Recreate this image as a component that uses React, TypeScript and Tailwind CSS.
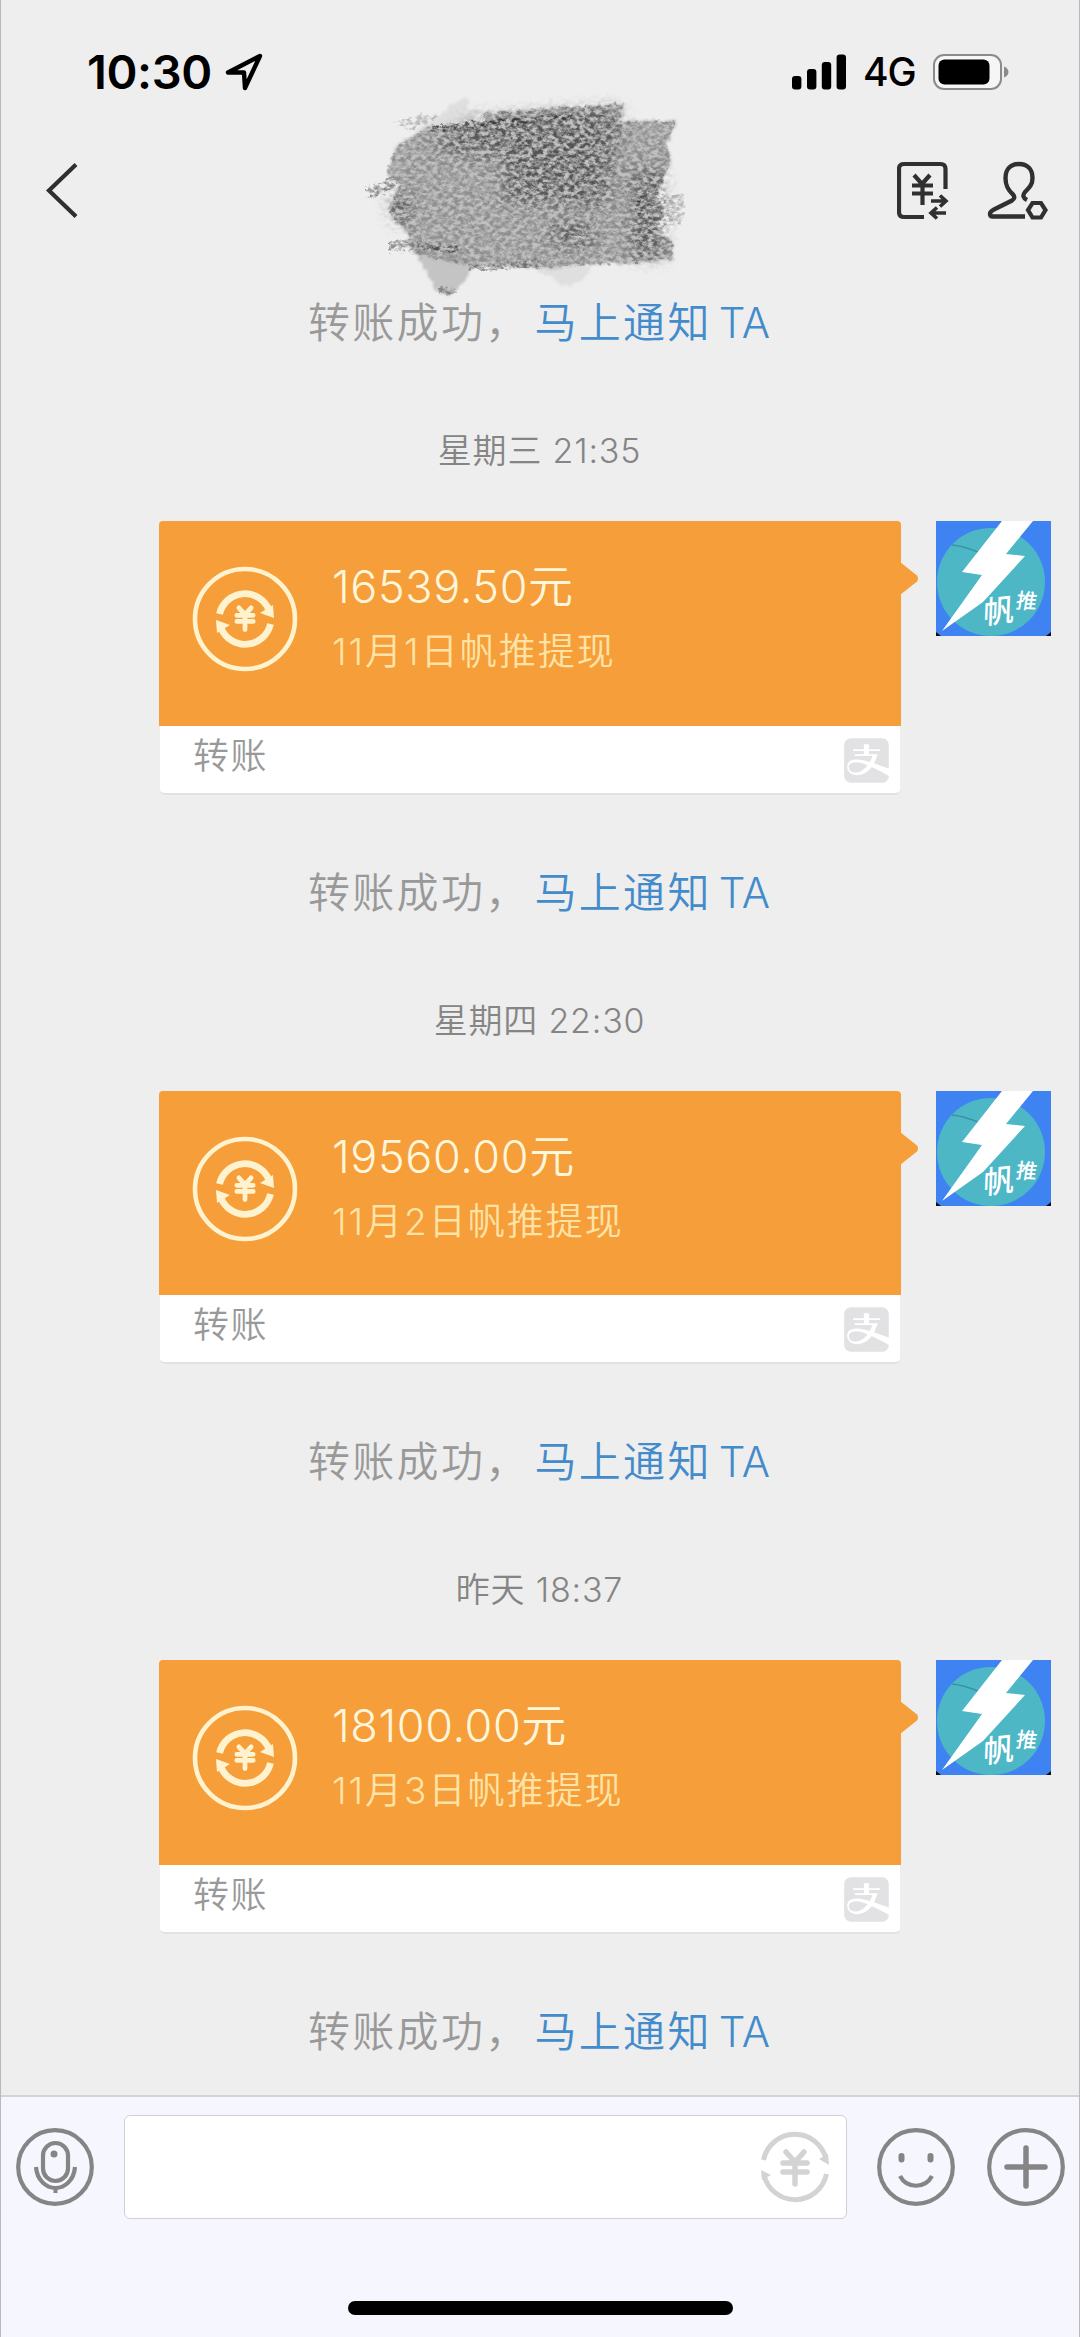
import { FaAlipay } from "react-icons/fa";

type Transfer = {
  time: string;
  amount: string;
  note: string;
};

const transfers: Transfer[] = [
  { time: "星期三 21:35", amount: "16539.50", note: "11月1日帆推提现" },
  { time: "星期四 22:30", amount: "19560.00", note: "11月2日帆推提现" },
  { time: "昨天 18:37", amount: "18100.00", note: "11月3日帆推提现" },
];

function StatusBar() {
  return (
    <div className="flex h-[97px] items-end justify-between pr-[70px] pb-[5px] pl-[86px]">
      <div className="flex h-[41px] items-center">
        <span className="w-[138px] text-[47px] leading-none font-semibold tracking-[-0.4px] text-black">10:30</span>
        <svg className="h-[38px] w-[38px]" viewBox="0 0 38 38" fill="none" stroke="#000" strokeWidth="4.4" strokeLinejoin="round">
          <path d="M35 3 L3 19.5 L19 19.5 L20 35 Z" />
        </svg>
      </div>
      <div className="flex h-[41px] items-center">
        <svg className="h-[36px] w-[54px]" viewBox="0 0 54 36">
          <rect x="0" y="22" width="9.4" height="13.5" rx="3" />
          <rect x="15" y="15" width="9.4" height="20.5" rx="3" />
          <rect x="29.8" y="8" width="9.4" height="27.5" rx="3" />
          <rect x="44.6" y="0.5" width="9.4" height="35" rx="3" />
        </svg>
        <span className="ml-[17px] w-[70px] text-[39px] leading-none font-[450] tracking-[-1.2px] text-black">4G</span>
        <svg className="h-[36px] w-[76px]" viewBox="0 0 76 36">
          <rect x="1" y="1" width="67" height="34" rx="10" fill="#f6f6f6" stroke="#8b8b8b" strokeWidth="2" />
          <rect x="5.500" y="5.500" width="51" height="25" rx="6" />
          <path d="M71 12.500 q4.500 2 4.500 5.500 q0 3.500 -4.500 5.500z" fill="#8b8b8b" />
        </svg>
      </div>
    </div>
  );
}

// Crayon strokes that cover the contact's name
function NameScribble() {
  return (
    <svg className="absolute -top-[9px] left-[358px] h-[220px] w-[340px]" viewBox="0 0 340 220">
      <defs>
        <filter id="wash" x="-5%" y="-5%" width="110%" height="110%">
          <feTurbulence type="fractalNoise" baseFrequency="0.14" numOctaves="3" seed="4" result="edge" />
          <feDisplacementMap in="SourceGraphic" in2="edge" scale="9" xChannelSelector="R" yChannelSelector="G" />
          <feGaussianBlur stdDeviation="1.2" />
        </filter>
        <filter id="crayon" x="-5%" y="-5%" width="110%" height="110%">
          <feTurbulence type="fractalNoise" baseFrequency="0.2" numOctaves="3" seed="4" result="edge" />
          <feDisplacementMap in="SourceGraphic" in2="edge" scale="9" xChannelSelector="R" yChannelSelector="G" result="rough" />
          <feTurbulence type="fractalNoise" baseFrequency="0.19 0.27" numOctaves="5" seed="21" result="grain" />
          <feColorMatrix in="grain" type="matrix" values="0 0 0 0 0  0 0 0 0 0  0 0 0 0 0  2.2 1.6 0 0 -1.4" result="mask" />
          <feComposite in="rough" in2="mask" operator="in" />
          <feGaussianBlur stdDeviation="0.6" />
        </filter>
        <filter id="smudge" x="-30%" y="-30%" width="160%" height="160%">
          <feGaussianBlur stdDeviation="8" />
        </filter>
      </defs>
      <g filter="url(#wash)" fill="#808080">
        <path
          d="M68 39 L124 34 L126 25 L264 15 L262 34 L318 33 L308 54 L312 74 L298 104 L302 124 L298 146 L314 152 L314 172 L240 176 L178 180 L112 178 L54 166 L50 148 L30 122 L40 98 L28 84 L38 58Z"
          fillOpacity="0.42"
        />
        <path d="M54 160 L118 176 L104 196 L90 208 L76 200 L68 184Z" fillOpacity="0.38" />
        <path d="M50 48 L106 8 L110 20 L122 24 L118 34 L68 39Z M178 178 L232 178 L226 190 L212 200 L180 184Z" fillOpacity="0.14" />
      </g>
      <g filter="url(#crayon)">
        <path
          d="M68 39 L124 34 L126 25 L264 15 L262 34 L318 33 L308 54 L312 74 L298 104 L302 124 L298 146 L314 152 L314 172 L240 176 L178 180 L112 178 L54 166 L50 148 L30 122 L40 98 L28 84 L38 58Z"
          fill="#5c5c5c"
          fillOpacity="0.5"
        />
        <path d="M300 106 L326 106 L324 134 L300 140Z M34 34 L64 26 L80 30 L50 42Z" fill="#777" fillOpacity="0.45" />
        <path d="M8 106 L34 94 M30 158 L54 158" fill="none" stroke="#666" strokeOpacity="0.7" strokeWidth="11" />
        <g filter="url(#smudge)" fill="#2b2b2b">
          <path d="M110 32 L262 20 L258 56 L246 118 L140 112 L150 72 L70 60Z" fillOpacity="0.6" />
          <path d="M190 136 H234 V158 H196Z M274 82 H304 V170 H274Z M30 104 H48 V134 H34Z" fillOpacity="0.6" />
        </g>
        <path d="M72 41 L130 36 L210 28 M60 158 L100 162 M282 110 L278 126" fill="none" stroke="#222" strokeOpacity="0.6" strokeWidth="6" />
        <path d="M110 180 L180 176 M80 202 L98 204" fill="none" stroke="#555" strokeOpacity="0.6" strokeWidth="6" />
      </g>
    </svg>
  );
}

function NavBar() {
  return (
    <header className="relative flex h-[188px] items-start justify-between pt-[64px] pr-[30px] pl-[43px]">
      <svg className="mt-[1px] h-[57px] w-[36px]" viewBox="0 0 36 57" fill="none" stroke="#2f2f2f" strokeWidth="4.2">
        <path d="M32 2.500 L5 28.500 L32 54.500" />
      </svg>
      <NameScribble />
      <div className="flex gap-[36px]">
        <svg className="h-[60px] w-[54px]" viewBox="0 0 54 60" fill="none" stroke="#303030" strokeWidth="4.200">
          <path d="M48.500 28 V8 Q48.500 3 43.500 3 H7 Q2 3 2 8 V51 Q2 56 7 56 H27" />
          <path d="M17 14 L25 23 L33 14 M15 24.500 H36 M15 32.500 H36 M25.500 22 V44" />
          <path d="M34 40 H49 M43 34.500 L49 40 L43 45.500 M49 52 H34 M40 46.500 L34 52 L40 57.500" strokeWidth="3.600" />
        </svg>
        <svg className="h-[60px] w-[62px]" viewBox="0 0 62 60" fill="none" stroke="#303030" strokeWidth="4.400">
          <path d="M40 39 Q34 36 38 31 C42 27 45.500 24 45.500 17 C45.500 8 40 3 32 3 C24 3 18.500 8 18.500 17 C18.500 25 21 29 26 33.500 Q29 37 25 39.500 L7 48.500 Q3 50.500 3 53 Q3 55.500 6 55.500 H38" />
          <path d="M45.500 42 H54 L58.500 49 L54 56.500 H45.500 L41 49Z" strokeWidth="4.200" />
        </svg>
      </div>
    </header>
  );
}

function YenMark({ strokeWidth }: { strokeWidth: number }) {
  return (
    <path
      d="M-9 -15 L0 -5 L9 -15 M-12 -4 H12 M-12 5 H12 M0 -6 V17"
      fill="none"
      stroke="currentColor"
      strokeLinecap="round"
      strokeWidth={strokeWidth}
    />
  );
}

function TransferIcon() {
  return (
    <svg className="h-[106px] w-[106px] shrink-0 text-[#fff3cf]" viewBox="-53 -53 106 106" fill="none" stroke="currentColor">
      <circle r="50" strokeWidth="4.600" />
      <path d="M-25.500 -5 A26 26 0 0 1 24 -9" strokeWidth="6.800" />
      <path d="M25.500 5 A26 26 0 0 1 -24 9" strokeWidth="6.800" />
      <path d="M28 -14 L29 -1 L15 -6Z M-28 14 L-29 1 L-15 6Z" fill="currentColor" stroke="none" />
      <g transform="translate(0 -1) scale(0.68)">
        <YenMark strokeWidth={7} />
      </g>
    </svg>
  );
}

function Avatar() {
  return (
    <svg className="h-[115px] w-[115px]" viewBox="0 0 115 115">
      <rect width="115" height="115" fill="#3f83f2" />
      <circle cx="55" cy="61" r="54" fill="#4db7c6" />
      <path d="M16 24 Q28 25 44 32" fill="none" stroke="#3793a4" strokeWidth="1.500" />
      <path d="M66 0 H97 L70 33 L89 35 L47 81 L6 110 L46 54 L26 51Z" fill="#fff" />
      <path d="M0 115 V111 L5 115Z M115 115 V111 L110 115Z" fill="#111" />
      <g fill="#fff" fontFamily="'Noto Sans CJK SC',sans-serif" fontWeight="500">
        <text transform="translate(47 103) rotate(-6) skewX(-8)" fontSize="31">帆</text>
        <text transform="translate(79 87) rotate(3) skewX(-6)" fontSize="21">推</text>
      </g>
    </svg>
  );
}

function SentNotice() {
  return (
    <p className="flex h-[60px] items-center pl-[308px] text-[42px] leading-[60px] font-[350] tracking-[2.300px] whitespace-nowrap text-[#999]">
      转账成功，
      <span className="ml-[5px] text-[#438bcb]">马上通知<span className="ml-[7px] tracking-[0px]">TA</span></span>
    </p>
  );
}

function TransferMessage({ time, amount, note }: Transfer) {
  return (
    <section>
      <p className="mt-[74px] h-[48px] text-center text-[34px] leading-[48px] font-[350] tracking-[0.800px] text-[#858585]">{time}</p>
      <div className="mt-[46px] flex items-start">
        <div className="relative ml-[159px] h-[273.700px] w-[742px]">
          <div className="flex h-[204.500px] rounded-t-[4px] bg-[#f69e39] pt-[45px] pl-[33px] text-[#fff6dc]">
            <TransferIcon />
            <div className="pl-[34px] whitespace-nowrap">
              <p className="h-[50px] -mt-[4px] text-[45px] leading-[50px] font-[350] tracking-[0.600px]">{amount}元</p>
              <p className="mt-[17px] h-[46px] text-[37px] leading-[46px] font-[350] tracking-[2px] text-[#ffe3a6]">{note}</p>
            </div>
          </div>
          <div className="mx-[1px] flex h-[69.200px] justify-between rounded-b-[5px] border-b-2 border-[#e2e2e2] bg-white pl-[33px]">
            <p className="mt-[6px] text-[36px] leading-[48px] font-[350] tracking-[1.500px] text-[#999]">转账</p>
            <FaAlipay className="mt-[9px] mr-[8px] text-[51px] text-[#e2e2e4]" />
          </div>
          <svg className="absolute top-[41px] left-[741px] h-[34px] w-[19px]" viewBox="0 0 19 34">
            <path d="M0 0 L17 13.500 Q19 16.500 17 19.500 L0 33Z" fill="#f69e39" />
          </svg>
        </div>
        <div className="ml-[35px]">
          <Avatar />
        </div>
      </div>
      <div className="mt-[68px]">
        <SentNotice />
      </div>
    </section>
  );
}

function InputBar() {
  return (
    <footer className="h-[242px] border-t-2 border-[#d2d2d8] bg-[#f6f7fe]">
      <div className="flex items-center pt-[18px] pl-[15px]">
        <svg className="h-[78px] w-[78px]" viewBox="-39 -39 78 78" fill="none" stroke="#858585" strokeWidth="4.200">
          <circle r="36.800" />
          <rect x="-12" y="-24" width="25" height="38" rx="12.500" />
          <path d="M-19 0 C-18 13 -9 21 0.500 21 C10 21 19 13 20 0" />
          <path d="M0.500 21 V26" strokeWidth="4" />
          <circle cx="-1" cy="-13" r="3.500" fill="#858585" stroke="none" />
        </svg>
        <div className="ml-[30px] flex h-[104px] w-[723px] items-center justify-end rounded-[6px] border-[1.500px] border-[#cfcfd7] bg-white pr-[15px]">
          <svg className="h-[72px] w-[72px] text-[#d3d3d3]" viewBox="-36 -36 72 72" fill="none" stroke="currentColor">
            <path d="M-31.500 -7 A32 32 0 0 1 31 -8" strokeWidth="5" />
            <path d="M31.500 7 A32 32 0 0 1 -31 8" strokeWidth="5" />
            <path d="M33 -13 L34 -2 L24 -8Z M-33 13 L-34 3 L-24 8Z" fill="currentColor" stroke="none" />
            <YenMark strokeWidth={5.5} />
          </svg>
        </div>
        <svg className="ml-[30px] h-[78px] w-[78px]" viewBox="-39 -39 78 78" fill="none" stroke="#858585" strokeWidth="4.200">
          <circle r="36.800" />
          <path d="M-16 9 C-9 22 9 22 16 9" />
          <path d="M-14.500 -11 V-7.500 M14.500 -11 V-7.500" strokeWidth="6" strokeLinecap="round" />
        </svg>
        <svg className="ml-[32px] h-[78px] w-[78px]" viewBox="-39 -39 78 78" fill="none" stroke="#858585" strokeWidth="4.200">
          <circle r="36.800" />
          <path d="M-19 0 H19 M0 -19 V19" strokeWidth="5.500" strokeLinecap="round" />
        </svg>
      </div>
      <div className="mt-[82px] ml-[347px] h-[14px] w-[385px] rounded-full bg-black" />
    </footer>
  );
}

export default function App() {
  return (
    <div
      lang="zh-CN"
      className="flex h-[2337px] w-[1080px] flex-col overflow-hidden border-x border-[#b9b9bb] bg-[#eeeeee] font-['Inter','Noto_Sans_CJK_SC',sans-serif]"
    >
      <StatusBar />
      <NavBar />
      <main className="-ml-px h-[1810px] pt-[8px]">
        <SentNotice />
        {transfers.map((item) => (
          <TransferMessage key={item.time} {...item} />
        ))}
      </main>
      <InputBar />
    </div>
  );
}
